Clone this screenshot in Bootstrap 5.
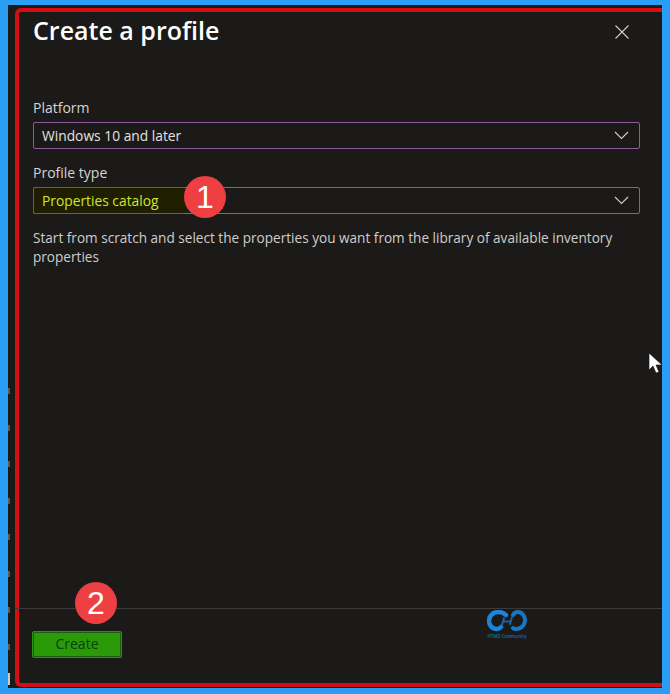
<!doctype html>
<html lang="en">
<head>
  <meta charset="utf-8">
  <meta name="viewport" content="width=device-width, initial-scale=1">
  <title>Create a profile</title>
  <link href="https://cdn.jsdelivr.net/npm/bootstrap@5.3.0/dist/css/bootstrap.min.css" rel="stylesheet">
  <style>
    html, body { height: 100%; }
    body { background: #2a9ef5; font-family: "Open Sans", "Liberation Sans", sans-serif; overflow: hidden; }
    .shot { position: relative; height: 694px; padding: 5px 8px 6px 8px; }
    .blade { height: 100%; background: #1b1a19; padding: 3px 0 1px 7px; }
    .frame { position: relative; height: 100%; border: solid #d20f14; border-width: 4px 0 4px 4px; border-top-left-radius: 6px; border-bottom-left-radius: 6px; color: #e4e2e0; }
    .blade-title { font-size: 25px; font-weight: 600; line-height: 34px; color: #fff; margin: 0; padding: 1px 0 0 14px; }
    .closer { background: none; border: 0; padding: 0; margin: 13px 33px 0 0; color: #d0cecc; line-height: 0; }
    .blade-body { padding: 0 22px 0 14px; }
    .top-gap { height: 51px; }
    .fld-label { font-size: 14px; line-height: 20px; color: #d6d4d2; margin: 0 0 4px; }
    .fld-box { height: 27px; margin-bottom: 14px; border: 1px solid #8e5aa0; border-radius: 2px; font-size: 13.8px; line-height: 25px; color: #e4e2e0; background: #1b1a19; }
    .fld-text { padding-left: 8px; }
    .fld-mark { margin: -1px 0 -1px -1px; padding: 0 0 0 8px; width: 152px; height: 27px; background: #201e00; border: 1px solid #8a5a1c; border-right: 0; border-radius: 2px 0 0 2px; color: #cfe52c; }
    .fld-chev { margin-right: 10px; line-height: 0; color: #d0cecc; }
    .fld-hint { font-size: 13.6px; line-height: 19px; color: #cfcdcb; margin: 0; }
    .blade-foot { position: absolute; left: -4px; right: 0; top: 596px; border-top: 1px solid #3b3a39; padding: 22px 0 0 17px; }
    .btn-make { width: 90px; height: 27px; padding: 0 0 2px; font-size: 14px; line-height: 21px; color: #0b3f0a; background: #2b9a08; border: 1px solid #2f8f14; box-shadow: inset 0 0 0 1px #1b5f0c; border-radius: 2px; }
    .btn-make:hover { color: #0b3f0a; background: #2b9a08; border-color: #2f8f14; }
    .step-dot { position: absolute; width: 42px; height: 42px; border-radius: 50%; background: #ee3f42; color: #fff; font-family: "Liberation Sans", sans-serif; font-size: 32px; line-height: 42px; text-align: center; }
    .step-one { left: 165px; top: 164px; }
    .step-two { left: 56px; top: 570px; }
    .logo-mark { position: absolute; left: 463px; top: 598px; width: 50px; text-align: center; line-height: 0; }
    .logo-text { margin-top: 1px; font-size: 4.3px; line-height: 6px; font-weight: 700; color: #1a5f98; white-space: nowrap; }
    .arrow-cur { position: absolute; left: 648px; top: 352px; line-height: 0; }
    .edge-ticks { position: absolute; left: 8px; top: 388px; display: flex; flex-direction: column; gap: 30.500px; }
    .edge-ticks i { display: block; width: 2px; height: 6px; background: #565a5e; }
    .edge-blip { position: absolute; left: 8px; top: 673px; width: 2px; height: 12px; background: #c8cacc; }
  </style>
</head>
<body>
  <div class="shot">
    <div class="blade">
      <div class="frame d-flex flex-column">
        <!-- header -->
        <div class="d-flex justify-content-between align-items-start">
          <h1 class="blade-title">Create a profile</h1>
          <button type="button" class="closer" aria-label="Close">
            <svg width="14" height="14" viewBox="0 0 14 14" fill="none" stroke="currentColor" stroke-width="1.1"><path d="M.5.5l13 13M13.500.5l-13 13"/></svg>
          </button>
        </div>

        <!-- form -->
        <div class="blade-body">
          <div class="top-gap"></div>
          <p class="fld-label">Platform</p>
          <div class="fld-box d-flex justify-content-between align-items-center">
            <span class="fld-text">Windows 10 and later</span>
            <span class="fld-chev"><svg width="15" height="9" viewBox="0 0 15 9" fill="none" stroke="currentColor" stroke-width="1.1"><path d="M1 1l6.500 6.500L14 1"/></svg></span>
          </div>
          <p class="fld-label">Profile type</p>
          <div class="fld-box d-flex justify-content-between align-items-center">
            <span class="fld-mark">Properties catalog</span>
            <span class="fld-chev"><svg width="15" height="9" viewBox="0 0 15 9" fill="none" stroke="currentColor" stroke-width="1.1"><path d="M1 1l6.500 6.500L14 1"/></svg></span>
          </div>
          <p class="fld-hint">Start from scratch and select the properties you want from the library of available inventory properties</p>
        </div>

        <!-- footer -->
        <div class="blade-foot">
          <button type="button" class="btn btn-make">Create</button>
        </div>

        <div class="step-dot step-one">1</div>
        <div class="step-dot step-two">2</div>

        <div class="logo-mark">
          <svg width="40" height="22" viewBox="0 0 40 22" fill="none" stroke-linecap="round">
            <path d="M19 5C17 3 14 2 11 2 6 2 2 6 2 11c0 4 3 8 8 8 2 0 3-1 4-2" stroke="#1c84d8" stroke-width="4.500"/>
            <path d="M26 5c1-2 3-3 5-3 4 0 7 4 7 8 0 5-4 9-9 9-1 0-2 0-3-1" stroke="#1877c4" stroke-width="4"/>
            <path d="M17 8l-2 7M25 7l-2 7M16 11.500h8" stroke="#1a62a0" stroke-width="2"/>
          </svg>
          <div class="logo-text">HTMD Community</div>
        </div>
      </div>
    </div>

    <div class="edge-ticks"><i></i><i></i><i></i><i></i><i></i><i></i><i></i><i></i></div>
    <div class="edge-blip"></div>

    <div class="arrow-cur">
      <svg width="15" height="22" viewBox="0 0 15 22"><path d="M1 1v17l4-4 3 7 3-1-3-7h6z" fill="#fff" stroke="#111" stroke-width=".6"/></svg>
    </div>
  </div>

  <script src="https://cdn.jsdelivr.net/npm/bootstrap@5.3.0/dist/js/bootstrap.bundle.min.js"></script>
</body>
</html>
